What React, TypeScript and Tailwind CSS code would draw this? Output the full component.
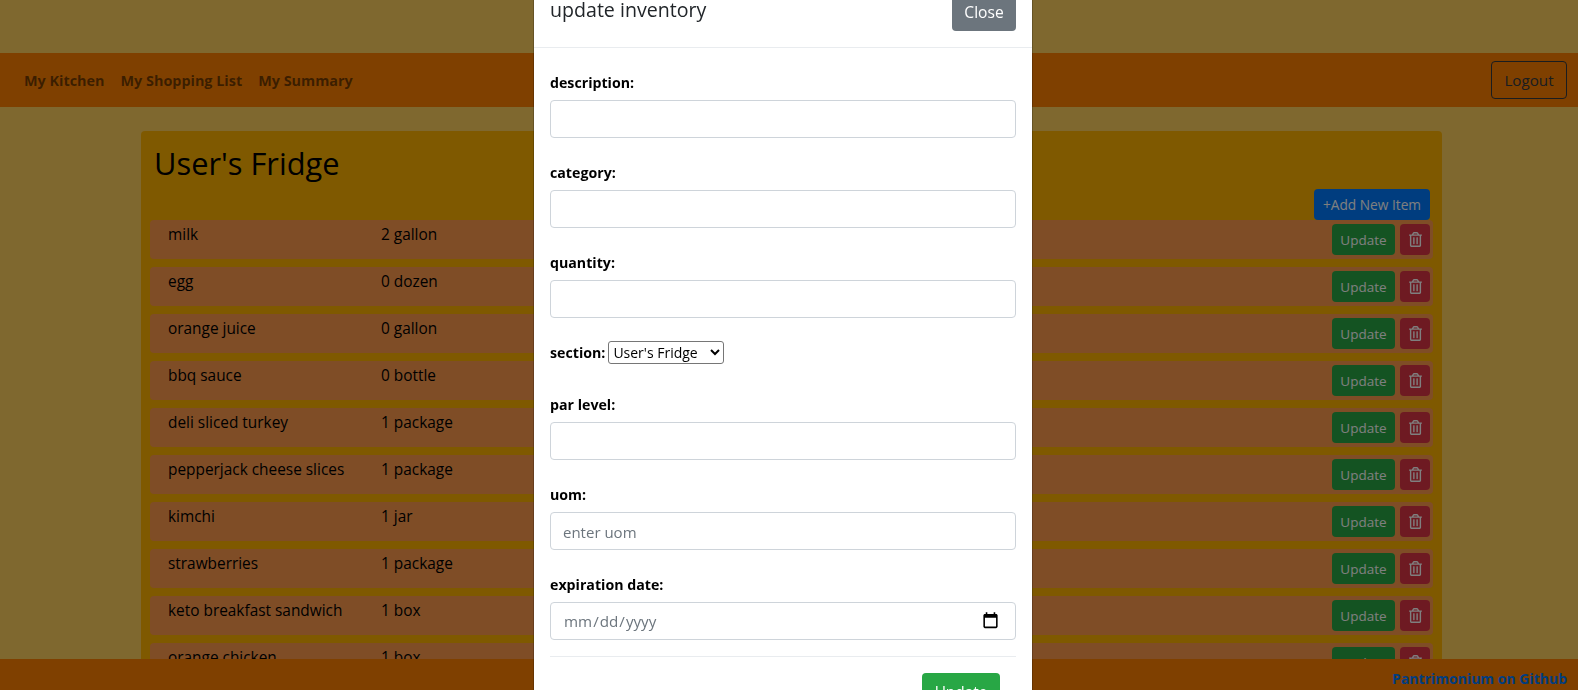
import { FaRegTrashAlt } from "react-icons/fa";

const items = [
  ["milk", "2 gallon"],
  ["egg", "0 dozen"],
  ["orange juice", "0 gallon"],
  ["bbq sauce", "0 bottle"],
  ["deli sliced turkey", "1 package"],
  ["pepperjack cheese slices", "1 package"],
  ["kimchi", "1 jar"],
  ["strawberries", "1 package"],
  ["keto breakfast sandwich", "1 box"],
  ["orange chicken", "1 box"],
];

const Field = ({ label, placeholder }: { label: string; placeholder?: string }) => (
  <div className="mb-6">
    <label className="block font-bold text-[14.2px] leading-[22px] mb-1.5 text-black">{label}</label>
    <input
      type="text"
      placeholder={placeholder}
      className="block w-full h-[38px] px-3 pt-px bg-white border border-[#ced4da] rounded text-[15px] text-[#495057] placeholder:text-[#6c757d]"
    />
  </div>
);

export default function App() {
  return (
    <div className="relative h-screen overflow-hidden flex flex-col bg-[#ffd05e] font-['Open_Sans','Liberation_Sans',sans-serif] text-[15.4px]">
      <div className="h-[53px] shrink-0" />
      <nav className="h-[54px] shrink-0 bg-[#ff8000] flex items-center justify-between pl-6 pr-[11px]">
        <div className="flex gap-4 pt-px font-bold text-[14.4px] text-[rgba(0,0,0,0.55)]">
          <span>My Kitchen</span>
          <span>My Shopping List</span>
          <span>My Summary</span>
        </div>
        <button className="w-[76px] h-[38px] border border-[#343a40] rounded text-[#343a40] text-[15.2px] text-center">Logout</button>
      </nav>

      <main className="flex-1 min-h-0 overflow-hidden pt-6 pl-[141px]">
        <div className="w-[1301px] bg-[#ffb300] rounded pt-3 pb-4">
          <h2 className="pl-[13px] pt-px text-[30.8px] leading-[38px] text-black">User's Fridge</h2>
          <div className="flex justify-end pr-3 mt-[7px]">
            <button className="w-[116px] h-[31px] pt-px bg-[#007bff] text-white text-[13.7px] rounded">+Add New Item</button>
          </div>
          <div className="px-[9px]">
            {items.map(([name, qty]) => (
              <div key={name} className="flex justify-between h-[39px] mb-2 pl-[18px] pr-[3px] bg-[#ff9a4d] rounded text-black">
                <div className="flex pt-[3px] leading-6">
                  <span className="w-[213px]">{name}</span>
                  <span>{qty}</span>
                </div>
                <div className="flex gap-[5px] pt-1">
                  <button className="w-[63px] h-[31px] pt-px bg-[#28a745] text-white text-[13.5px] rounded">Update</button>
                  <button className="w-[30px] h-[31px] bg-[#dc3545] text-white rounded flex items-center justify-center">
                    <FaRegTrashAlt className="w-[13px] h-[15px]" />
                  </button>
                </div>
              </div>
            ))}
          </div>
        </div>
      </main>

      <footer className="h-[31px] shrink-0 bg-[#ff8000] flex items-center justify-end pt-2 pr-[11px]">
        <a className="font-bold text-[14px] text-[#007bff]">Pantrimonium on Github</a>
      </footer>

      {/* modal backdrop */}
      <div className="fixed inset-0 bg-black/50" />
      <div className="fixed top-[-24px] left-[533px] w-[500px] bg-white bg-clip-padding border border-black/20 rounded-md">
        <div className="flex justify-between items-start p-4 border-b border-[#e9ecef]">
          <h5 className="text-[19.6px] leading-6 pt-[5px] text-[#212529]">update inventory</h5>
          <button className="w-16 h-[38px] pt-px bg-[#6c757d] text-white text-[15.6px] rounded">Close</button>
        </div>
        <div className="px-4 pt-6">
          <Field label="description:" />
          <Field label="category:" />
          <Field label="quantity:" />
          <div className="flex items-center h-[23px] mt-[-1px] mb-[30px]">
            <label className="font-bold text-[14.2px] mr-[3px] text-black">section:</label>
            <select className="w-[116px] h-[23px] bg-white border border-[#767676] rounded-[3px] text-[14px] text-black">
              <option>User's Fridge</option>
            </select>
          </div>
          <Field label="par level:" />
          <Field label="uom:" placeholder="enter uom" />
          <div className="mb-4">
            <label className="block font-bold text-[14.2px] leading-[22px] mb-1.5 text-black">expiration date:</label>
            <div className="relative">
              <input
                type="date"
                className="block w-full h-[38px] px-3 bg-white border border-[#ced4da] rounded text-[15.2px] text-[#6c757d] [&::-webkit-calendar-picker-indicator]:opacity-0"
              />
              <svg className="absolute right-4 top-1/2 -translate-y-1/2 w-[19px] h-[19px] pointer-events-none" viewBox="0 0 24 24" fill="#000">
                <path d="M19 3h-1V1h-2v2H8V1H6v2H5c-1.11 0-2 .9-2 2v14c0 1.1.89 2 2 2h14c1.1 0 2-.9 2-2V5c0-1.1-.9-2-2-2zm0 16H5V8h14v11z" />
              </svg>
            </div>
          </div>
          <div className="border-t border-[#e9ecef] pt-4 pr-4 pb-4 flex justify-end">
            <button className="w-[78px] h-[38px] pt-px bg-[#28a745] text-white font-medium rounded">Update</button>
          </div>
        </div>
      </div>
    </div>
  );
}
